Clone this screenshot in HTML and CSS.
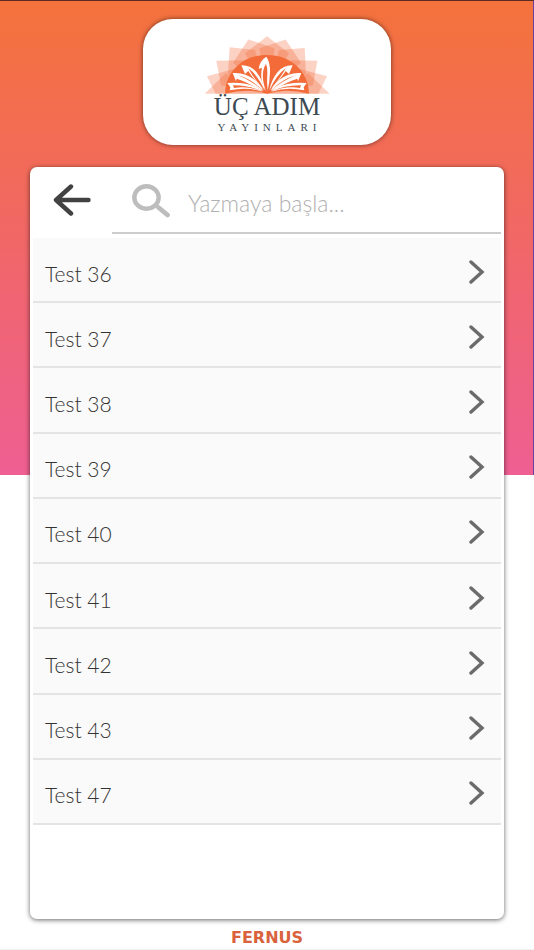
FILE: index.html
```html
<!DOCTYPE html>
<html lang="tr">
<head>
<meta charset="utf-8">
<meta name="viewport" content="width=device-width, initial-scale=1">
<title>Üç Adım Yayınları</title>
<link rel="stylesheet" href="styles.css">
</head>
<body>
<svg class="defs" aria-hidden="true">
  <symbol id="chevron" viewBox="0 0 16 24"><path d="M2 2 13 12 2 22" fill="none" stroke="currentColor" stroke-width="3.4" stroke-linecap="round" stroke-linejoin="miter"/></symbol>
</svg>
<div class="page">
  <header class="brand">
    <svg class="brand-mark" viewBox="213 76 378 174" aria-hidden="true">
      <defs><path id="petal" d="M402 77 468 128 402 249 336 128Z"/></defs>
      <g fill="#f26b38" fill-opacity=".3">
        <use href="#petal"/>
        <use href="#petal" transform="rotate(-19 402 249)"/>
        <use href="#petal" transform="rotate(19 402 249)"/>
        <path d="M290 110 366 118 402 249 285 190Z"/>
        <path d="M515 112 438 118 402 249 519 190Z"/>
        <path d="M250 150 330 149 402 249 264 224Z"/>
        <path d="M553 150 474 149 402 249 540 224Z"/>
        <path d="M222 197 306 174 402 249H248Z"/>
        <path d="M582 197 498 174 402 249H556Z"/>
        <path d="M215 249 278 188 402 249Z"/>
        <path d="M590 249 526 188 402 249Z"/>
      </g>
      <path d="M276 249C277 213 292 184 315 164 337 144 365 133 402 133S467 144 489 164C512 184 527 213 528 249Q458 231 402 249 346 231 276 249Z" fill="#f26b38"/>
      <g fill="#fff">
        <path d="M399 241C387 225 381 199 387 172L377 174Q381 149 400 138 412 155 411 184 410 216 404 240 401 213 403 187 404 171 399 160C384 181 389 215 399 241Z"/>
        <path id="leaf-a" d="M395 239C374 220 357 198 346 181L336 190 325 164Q352 163 370 184 389 207 395 239 373 192 346 173 364 207 395 239Z"/>
        <path id="leaf-b" d="M391 240C360 226 333 210 311 204L309 212 299 187Q336 184 364 207 382 221 391 240 355 205 316 194 353 209 391 240Z"/>
        <path id="leaf-c" d="M389 243Q342 228 290 239L292 230 283 217Q337 213 373 231 384 236 389 243Q348 223 300 224L303 232Q345 224 389 243Z"/>
        <use href="#leaf-a" transform="matrix(-1 0 0 1 804 0)"/>
        <use href="#leaf-b" transform="matrix(-1 0 0 1 804 0)"/>
        <use href="#leaf-c" transform="matrix(-1 0 0 1 804 0)"/>
      </g>
    </svg>
    <span class="brand-name">ÜÇ ADIM</span>
    <span class="brand-sub">YAYINLARI</span>
  </header>

  <main class="panel">
    <form class="search" role="search">
      <button class="back" type="button" aria-label="Geri">
        <svg viewBox="0 0 38 32" aria-hidden="true"><path d="M18 2.5 3 16 18 29.5M3 16H35.500" fill="none" stroke="currentColor" stroke-width="4.400" stroke-linecap="round" stroke-linejoin="round"/></svg>
      </button>
      <div class="field">
        <label for="query" aria-label="Ara">
          <svg viewBox="0 0 38 34" aria-hidden="true"><g fill="none" stroke="currentColor"><ellipse cx="14.500" cy="13.500" rx="12.200" ry="11.200" stroke-width="4.400"/><path d="m26.500 23.500 9 7.500" stroke-width="4.800" stroke-linecap="round"/></g></svg>
        </label>
        <input id="query" type="text" placeholder="Yazmaya başla...">
      </div>
    </form>
    <nav class="tests">
      <a href="#"><span>Test 36</span><svg aria-hidden="true"><use href="#chevron"/></svg></a>
      <a href="#"><span>Test 37</span><svg aria-hidden="true"><use href="#chevron"/></svg></a>
      <a href="#"><span>Test 38</span><svg aria-hidden="true"><use href="#chevron"/></svg></a>
      <a href="#"><span>Test 39</span><svg aria-hidden="true"><use href="#chevron"/></svg></a>
      <a href="#"><span>Test 40</span><svg aria-hidden="true"><use href="#chevron"/></svg></a>
      <a href="#"><span>Test 41</span><svg aria-hidden="true"><use href="#chevron"/></svg></a>
      <a href="#"><span>Test 42</span><svg aria-hidden="true"><use href="#chevron"/></svg></a>
      <a href="#"><span>Test 43</span><svg aria-hidden="true"><use href="#chevron"/></svg></a>
      <a href="#"><span>Test 47</span><svg aria-hidden="true"><use href="#chevron"/></svg></a>
    </nav>
  </main>
  <footer class="maker">FERNUS</footer>
</div>
</body>
</html>
```
FILE: styles.css
```css
* { box-sizing: border-box; }

body {
  margin: 0;
  font-family: Lato, "Noto Sans", sans-serif;
  font-weight: 300;
  background: #fff;
}

.defs { display: none; }

.page {
  min-height: 100vh;
  display: flex;
  flex-direction: column;
  align-items: center;
  padding: 18px 30px 0;
  border-top: 1px solid #5c2a20;
  border-bottom: 1px solid #f1f1f1;
  background:
    linear-gradient(#6b3fa0, #6b3fa0) right top / 1px 50% no-repeat,
    linear-gradient(#f4723c, #f26b57 33%, #f06475 66%, #ef5f92) left top / 100% 50% no-repeat;
}

.brand {
  width: 248px;
  height: 126px;
  display: flex;
  flex-direction: column;
  align-items: center;
  padding-top: 17px;
  border-radius: 30px;
  background: #fff;
  box-shadow: 0 0 5px rgba(0, 0, 0, .55);
  color: #3d4a52;
  font-family: "Liberation Serif", serif;
  font-weight: 400;
}

.brand-mark { width: 126px; height: 58px; }

.brand-name { font-size: 25px; line-height: 25px; }

.brand-sub {
  padding-left: 5px;
  font-size: 11px;
  line-height: 16px;
  letter-spacing: 5px;
}

.panel {
  width: 100%;
  flex: 1;
  margin-top: 22px;
  padding: 0 3px;
  border-radius: 7px;
  background: #fff;
  box-shadow: 0 1px 5px rgba(0, 0, 0, .6);
}

.search {
  display: flex;
  height: 71px;
  padding-bottom: 4px;
}

.back {
  flex: none;
  width: 78px;
  padding: 2px 0 0;
  border: 0;
  background: none;
  color: #424242;
}

.back svg { width: 38px; height: 32px; }

.field {
  flex: 1;
  min-width: 0;
  display: flex;
  align-items: center;
  gap: 18px;
  margin-left: 1px;
  padding: 2px 0 0 20px;
  border-bottom: 2px solid #ccc;
}

.field label { color: #bdbdbd; }
.field svg { display: block; width: 38px; height: 34px; }

.field input {
  flex: 1;
  min-width: 0;
  padding: 4px 0 0;
  border: 0;
  outline: 0;
  background: none;
  color: #555;
  font: inherit;
  font-size: 23px;
}

.field input::placeholder { color: #b0b0b0; opacity: 1; }

.tests {
  display: grid;
  grid-auto-rows: 1fr;
  min-height: 587px;
}

.tests a {
  display: flex;
  align-items: center;
  justify-content: space-between;
  padding: 4px 16px 0 12px;
  border-bottom: 2px solid #e4e4e4;
  background: #fafafa;
  color: #333;
  font-size: 21px;
  line-height: 32px;
  text-decoration: none;
}

.tests span { padding-top: 4px; }
.tests svg { width: 16px; height: 24px; color: #6b6b6b; }

.maker {
  height: 30px;
  padding-top: 4px;
  color: #d9623c;
  font: bold 16px/30px "DejaVu Sans", sans-serif;
}
```
